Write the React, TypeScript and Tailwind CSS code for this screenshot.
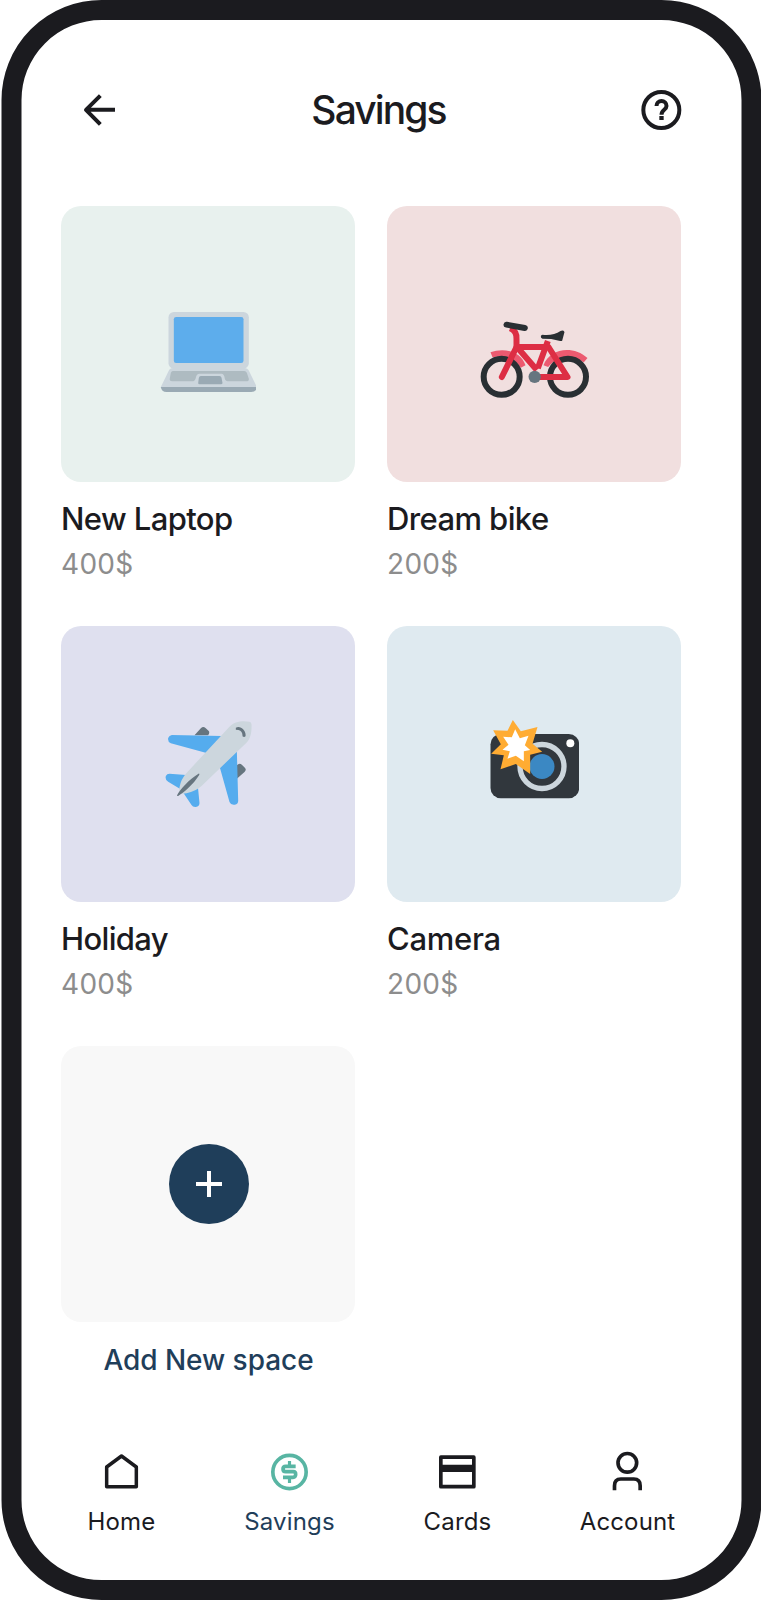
import type { ReactNode } from "react";

function LaptopArt() {
  return (
    <svg className="size-24" viewBox="61.5 18 288 288">
      <rect x="87" y="66" width="241" height="170" rx="16" fill="#CCD6DD" />
      <rect x="103" y="81" width="209" height="138" rx="7" fill="#5DADEC" />
      <path d="M64 291 L87 244 Q91 234 101 234 H314 Q324 234 329 244 L352 291 V293 H64Z" fill="#CCD6DD" />
      <path d="M64 291 H352 Q350 306 335 306 H81 Q66 306 64 291Z" fill="#9AAAB4" />
      <path d="M100 243 H314 Q320 243 322 248 L328 266 Q329 274 320 274 H269 Q258 274 256 266 Q254 251 246 251 H180 Q171 251 169 263 Q167 274 157 274 H98 Q89 274 91 265 L94 248 Q96 243 100 243Z" fill="#AEBBC1" />
      <path d="M184 258 H240 Q245 258 246 263 L249 279 Q249 283 244 283 H180 Q176 283 176 279 L178 264 Q179 258 184 258Z" fill="#9AAAB4" />
    </svg>
  );
}

function BikeArt() {
  return (
    <svg className="size-[108px] overflow-visible" viewBox="46.5 -45 324 324">
      <path d="M78 142 C112 129 167 134 183 181 L169 188 C153 162 121 148 84 157Z" fill="#EC5A70" />
      <path d="M237 181 C255 130 325 119 369 159 L358 172 C325 149 279 150 251 186Z" fill="#EC5A70" />
      <circle cx="111.500" cy="215.500" r="54" fill="none" stroke="#292F33" strokeWidth="18" />
      <circle cx="310.500" cy="215.500" r="54" fill="none" stroke="#292F33" strokeWidth="18" />
      <path d="M112 216 L156 126 H252 L309 216 H212" fill="none" stroke="#DD2E44" strokeWidth="18" strokeLinecap="round" strokeLinejoin="round" />
      <path d="M160 129 L217 195 M250 108 L220 190" fill="none" stroke="#DD2E44" strokeWidth="18" />
      <path d="M137 70 Q158 79 156 103 V126" fill="none" stroke="#DD2E44" strokeWidth="18" />
      <path d="M126 59 L181 69" fill="none" stroke="#292F33" strokeWidth="18" strokeLinecap="round" />
      <path d="M234 89 C252 91 274 89 288 78 Q296 74 300 81 L293 107 Q291 109 287 108 L260 102 L234 101 Q228 99 229 93 Q230 90 234 89Z" fill="#292F33" />
      <circle cx="210.500" cy="215.500" r="18.500" fill="#66757F" />
    </svg>
  );
}

function PlaneArt() {
  return (
    <svg className="size-[90px]" viewBox="40.5 42 270 270">
      <path d="M135 91 L154 70 Q161 63 168 69 L177 77 Q182 82 176 91Z M262 181 Q269 173 277 179 L286 188 Q292 194 285 201 L262 221Z" fill="#66757F" />
      <path d="M67 90 L216 93 L174 145 L64 115 Q54 111 56 99 Q59 91 67 90Z M262 136 L266 285 Q267 297 256 299 Q244 301 240 291 L210 184Z M60 206 L110 210 L91 251 L56 230 Q46 225 49 213 Q52 206 60 206Z M145 244 L150 294 Q150 305 139 306 Q130 307 126 300 L102 264Z" fill="#55ACEE" />
      <path d="M240 65 C254 49 279 46 300 50 Q305 51 306 58 C307 78 304 100 290 114 L156 243 Q139 259 111 265 L88 268 L90 247 Q94 222 112 203Z" fill="#CCD6DD" />
      <path d="M82 272 C90 254 121 221 147 206 Q151 205 149 210 C133 237 101 264 86 273Z M259 68 C273 60 291 77 288 94 Q284 98 279 94 Q280 79 267 75 L259 74Z" fill="#66757F" />
    </svg>
  );
}

function CameraArt() {
  return (
    <svg className="size-[90px]" viewBox="43.5 42 270 270">
      <rect x="48" y="87" width="266" height="193" rx="31" fill="#31373D" />
      <circle cx="202.500" cy="184.500" r="66" fill="none" stroke="#CCD6DD" strokeWidth="16" />
      <circle cx="202.500" cy="184.500" r="37.500" fill="#3B88C3" />
      <circle cx="287.500" cy="115" r="12" fill="#FFF" />
      <path d="M115 45 L139 79 L189 66 L174 116 L203 140 L167 149 L167 207 L124 177 L78 193 L88 151 L50 146 L79 118 L56 76 L99 77Z" fill="#FFAC33" />
      <path d="M122 73 L136 100 L162 92 L151 121 L167 135 L148 139 L148 169 L124 152 L99 161 L106 139 L84 134 L102 119 L86 95 L112 97Z" fill="#FFF" />
    </svg>
  );
}

function Space({ name, amount, tint, track, children }: { name: string; amount: string; tint: string; track: string; children: ReactNode }) {
  return (
    <article className="flex h-[420px] flex-col">
      <div className={`flex h-[276px] items-center justify-center rounded-[20px] ${tint}`}>{children}</div>
      <h2 className={`mt-4 text-[31px] leading-[42px] font-medium whitespace-nowrap text-[#1b1b1f] ${track}`}>{name}</h2>
      <p className="mt-[7px] text-[28px] leading-[34px] tracking-[0.3px] text-[#8d8d8d]">{amount}</p>
    </article>
  );
}

function NavItem({ label, active = false, children }: { label: string; active?: boolean; children: ReactNode }) {
  return (
    <a className={`flex flex-col items-center gap-[13px] ${active ? "text-[#1f3e5a]" : "text-[#1b1b1f]"}`}>
      {children}
      <span className="text-[24px] leading-[34px] tracking-[0.15px]">{label}</span>
    </a>
  );
}

export default function App() {
  return (
    <div className="h-[1600px] w-[761px] overflow-hidden bg-white font-['Inter','Liberation_Sans',sans-serif]">
      <div className="ml-px flex h-[1600px] w-[760px] translate-x-[0.5px] flex-col rounded-[100px] border-[20px] border-[#1b1b1f] bg-white">
        <header className="mt-[66px] flex h-12 items-center justify-between pr-[60px] pl-[62px]">
          <svg className="size-8" viewBox="250.5 282 96 96" fill="none" stroke="#1b1b1f" strokeWidth="12">
            <path d="M345 329.500 H258 M301 287 L258 329.500 L301 373" strokeLinejoin="round" />
          </svg>
          <h1 className="text-[39px] leading-12 font-medium tracking-[-1.9px] text-[#1b1b1f]">Savings</h1>
          <svg className="size-10 overflow-visible" viewBox="784 270 120 120" fill="none" stroke="#1b1b1f" strokeWidth="12">
            <circle cx="843.500" cy="330" r="54" />
            <path d="M829 318 A15 15 0 0 1 859 318 C859 330 844 329 844 344" />
            <path d="M844 348 V360" strokeWidth="13" />
          </svg>
        </header>

        <main className="mt-[72px] ml-10 grid w-[620px] translate-x-[-0.5px] grid-cols-[294px_294px] gap-x-8">
          <Space name="New Laptop" amount="400$" tint="bg-[#e8f1ee]" track="tracking-[-0.6px]"><LaptopArt /></Space>
          <Space name="Dream bike" amount="200$" tint="bg-[#f1dfdf]" track="tracking-[-0.6px]"><BikeArt /></Space>
          <Space name="Holiday" amount="400$" tint="bg-[#dfe0ef]" track="tracking-[-0.65px]"><PlaneArt /></Space>
          <Space name="Camera" amount="200$" tint="bg-[#dfeaf0]" track="tracking-[-0.3px]"><CameraArt /></Space>
          <button className="flex h-[336px] flex-col items-center">
            <span className="flex h-[276px] w-full items-center justify-center rounded-[20px] bg-[#f8f8f8] pl-[2px]">
              <span className="flex size-20 items-center justify-center rounded-full bg-[#1f3e5a]">
                <svg className="size-[26px]" viewBox="0 0 26 26" stroke="#fff" strokeWidth="4">
                  <path d="M13 0 V26 M0 13 H26" />
                </svg>
              </span>
            </span>
            <span className="mt-[21px] pl-px text-[28px] leading-[34px] font-medium tracking-[-0.05px] text-[#1f3e5a]">Add New space</span>
          </button>
        </main>

        <nav className="mt-[70px] ml-4 grid grid-cols-[168px_168px_168px_172px]">
          <NavItem label="Home">
            <svg className="size-10" viewBox="304.5 156 120 120" fill="none" stroke="currentColor" strokeWidth="10.500" strokeLinejoin="round">
              <path d="M320 201 L364.500 168 L409 201 V260 H320Z" />
            </svg>
          </NavItem>
          <NavItem label="Savings" active>
            <svg className="size-10" viewBox="808.5 156 120 120" fill="none" stroke="#58b5a3" strokeWidth="11">
              <circle cx="868.500" cy="216" r="50" />
              <path d="M887 199 H857 Q849 199 849 207 Q849 215 857 215 H880 Q887 215 887 223 Q887 232 879 232 H849" />
              <path d="M868.500 183 V199 M868.500 232 V249" strokeWidth="9.500" />
            </svg>
          </NavItem>
          <NavItem label="Cards">
            <svg className="size-10" viewBox="172.5 156 120 120" fill="none" stroke="currentColor" strokeWidth="11" strokeLinejoin="round">
              <path d="M182.500 171.500 H281.500 V260 H182.500Z" />
              <path d="M182.500 205 H281.500" strokeWidth="22" />
            </svg>
          </NavItem>
          <NavItem label="Account">
            <svg className="size-10 overflow-visible" viewBox="682 156 120 120" fill="none" stroke="currentColor" strokeWidth="11">
              <circle cx="741.500" cy="188.500" r="28" />
              <path d="M703 271 V257 Q703 237 722 237 H761 Q780 237 780 257 V271" />
            </svg>
          </NavItem>
        </nav>
      </div>
    </div>
  );
}
